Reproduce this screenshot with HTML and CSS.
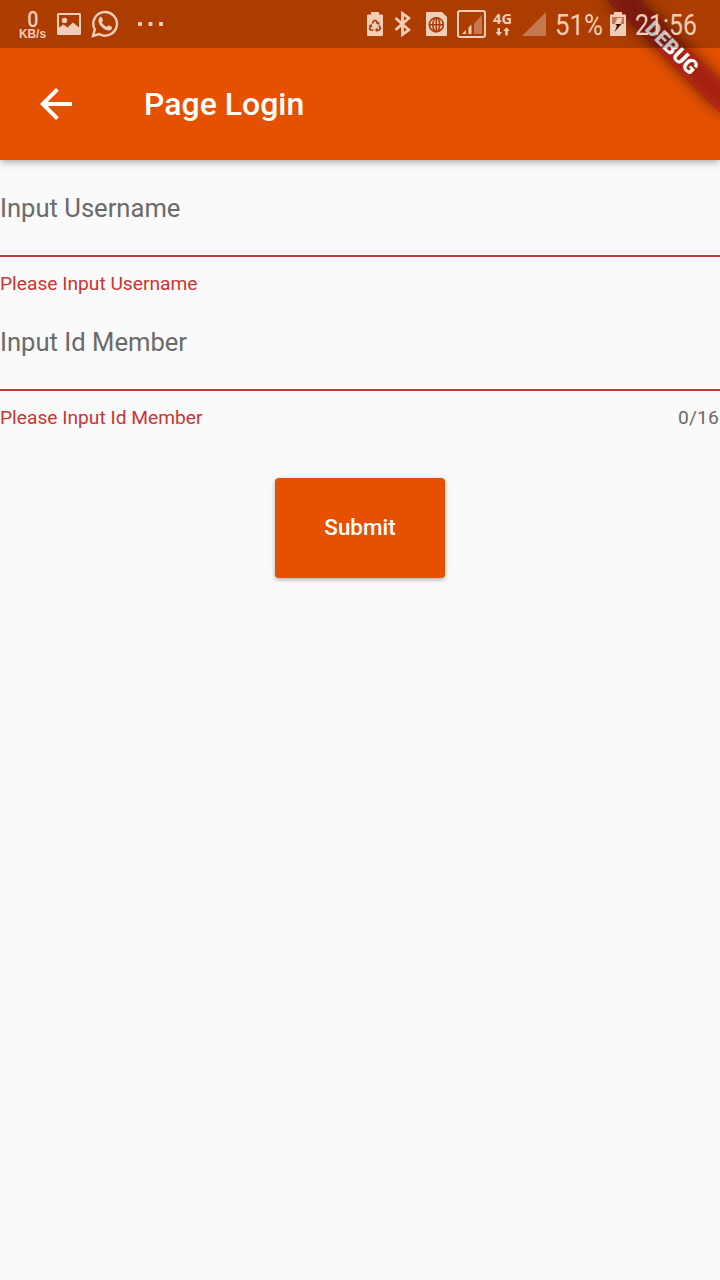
FILE: index.html
```html
<!DOCTYPE html>
<html lang="en">
<head>
<meta charset="utf-8">
<title>Page Login</title>
<link rel="stylesheet" href="styles.css">
</head>
<body>
<div class="screen">
  <svg class="debug-banner" width="160" height="160" viewBox="0 0 160 160" role="img" aria-label="DEBUG">
    <defs>
      <filter id="soft" x="-30%" y="-150%" width="160%" height="400%"><feGaussianBlur stdDeviation="7.4"/></filter>
    </defs>
    <g transform="translate(160 0) rotate(45)">
      <rect class="ribbon-shadow" x="-80" y="56" width="160" height="24" filter="url(#soft)"/>
      <rect class="ribbon" x="-80" y="56" width="160" height="24"/>
      <text class="ribbon-text" x="0" y="74.8" text-anchor="middle">DEBUG</text>
    </g>
  </svg>

  <div class="status-bar">
    <div class="status-left">
      <svg class="ico net-speed" width="28" height="30" viewBox="0 0 28 30">
        <text class="speed-num" x="0" y="0" transform="translate(9.200 16.500) scale(.92 1)">0</text>
        <text class="speed-unit" x="1" y="28.300" textLength="27" lengthAdjust="spacingAndGlyphs">KB/s</text>
      </svg>
      <svg class="ico picture" width="24" height="22" viewBox="0 0 24 22">
        <path fill-rule="evenodd" d="M1.500 0h21A1.500 1.500 0 0 1 24 1.500v19a1.500 1.500 0 0 1-1.500 1.500h-21A1.500 1.500 0 0 1 0 20.500v-19A1.500 1.500 0 0 1 1.500 0zM2 2v12.500l4.500-3 4 3 5.500-5 6 5V2zM7.500 4.700a2.700 2.700 0 1 1 0 5.400 2.700 2.700 0 0 1 0-5.400z"/>
      </svg>
      <svg class="ico chat" width="28" height="28" viewBox="0 0 28 28">
        <path class="line" d="M3.800 19.500A11.800 11.800 0 1 1 8.200 24L2 26z"/>
        <path d="M8.600 7.500c.7-.8 1.700-.9 2.200-.1l1.200 2.700c.3.800-1.200 1.800-1 2.400.9 1.900 2.600 3.400 4.700 4.300.8.200 1.500-1.700 2.200-1.400l2.700 1.400c.8.500.4 2.400-.9 3.100-2.100 1.200-5 .2-7.600-1.700-2.500-1.900-4.400-4.500-4.700-6.900-.1-1.500.4-2.900 1.200-3.800z"/>
      </svg>
      <svg class="ico more" width="26" height="4" viewBox="0 0 26 4">
        <rect x="0" width="4" height="4" rx="1"/><rect x="10.500" width="4" height="4" rx="1"/><rect x="21" width="4" height="4" rx="1"/>
      </svg>
    </div>
    <div class="status-right">
      <svg class="ico saver" width="16" height="24" viewBox="0 0 16 24">
        <path d="M4 0h8v2.500h3a1 1 0 0 1 1 1V23a1 1 0 0 1-1 1H1a1 1 0 0 1-1-1V3.500a1 1 0 0 1 1-1h3z"/>
        <g class="cut-line"><path d="M5.300 11.500L7 8.500h2l1.700 3M12 13.500l1.500 2.700-1 1.800H9.500M6.500 18h-3l-1-1.800L4 13.500"/></g>
        <path class="cut" d="M12.300 9.500v3.500l-3.200-1.500zM10.500 15.500v4.800L7.800 18zM1.500 13.500l3.200-1.400.7 3.400z"/>
      </svg>
      <svg class="ico bluetooth" width="17" height="26" viewBox="0 0 17 26">
        <path class="line thick" d="M1.500 7L14.800 18.800 8.500 23.500V2.500l6.300 4.700L1.500 19"/>
      </svg>
      <svg class="ico sim" width="21" height="24" viewBox="0 0 21 24">
        <path d="M1 0h15l5 5v18a1 1 0 0 1-1 1H1a1 1 0 0 1-1-1V1a1 1 0 0 1 1-1z"/>
        <g class="cut-line"><circle cx="10.300" cy="12.700" r="7"/><ellipse cx="10.300" cy="12.700" rx="3.400" ry="7"/><path d="M10.300 5.700v14M3.400 12.700h13.800"/></g>
      </svg>
      <svg class="ico signal-box" width="29" height="28" viewBox="0 0 29 28">
        <rect class="line frame" x="1" y="1" width="27" height="26" rx="2"/>
        <path class="dim" d="M17 13.500l8-8.500v19h-8z"/>
        <path d="M5 24l4-4v4zM11.500 17.500l3-3V24h-3z"/>
      </svg>
      <svg class="ico net-type" width="20" height="26" viewBox="0 0 20 26">
        <text class="net-label" x="0" y="13" textLength="19" lengthAdjust="spacingAndGlyphs">4G</text>
        <path d="M4.500 17h2.500v4h2l-3.200 4-3.300-4h2zM12.200 24.500h2.600V20h2l-3.300-3.700-3.300 3.700h2z"/>
      </svg>
      <svg class="ico signal" width="24" height="24" viewBox="0 0 24 24"><path class="dim" d="M24 0v24H0z"/></svg>
      <svg class="ico percent" width="48" height="30" viewBox="0 0 48 30">
        <text class="clock-text" x="0" y="25.500" textLength="48" lengthAdjust="spacingAndGlyphs">51%</text>
      </svg>
      <svg class="ico battery" width="16" height="24" viewBox="0 0 16 24">
        <path d="M4 0h8v2.500h3a1 1 0 0 1 1 1V23a1 1 0 0 1-1 1H1a1 1 0 0 1-1-1V3.500a1 1 0 0 1 1-1h3z"/>
        <path class="cell" d="M2 5h12v7H2z"/>
        <path d="M7.300 6h5L10.500 12H4.800z"/>
        <path class="bolt" d="M5.300 12h6.200L4.500 20l2.500-6z"/>
      </svg>
      <svg class="ico clock" width="62" height="30" viewBox="0 0 62 30">
        <text class="clock-text" x="0" y="25.500" textLength="62" lengthAdjust="spacingAndGlyphs">21:56</text>
      </svg>
    </div>
  </div>

  <header class="app-bar">
    <svg class="back" width="48" height="48" viewBox="0 0 24 24"><path d="M20 11H7.830l5.590-5.590L12 4l-8 8 8 8 1.410-1.410L7.830 13H20v-2z"/></svg>
    <h1 class="title">Page Login</h1>
  </header>

  <main class="form">
    <div class="field">
      <div class="label">Input Username</div>
      <div class="helper"><span class="error">Please Input Username</span></div>
    </div>
    <div class="field">
      <div class="label">Input Id Member</div>
      <div class="helper"><span class="error">Please Input Id Member</span><span class="counter">0/16</span></div>
    </div>
    <button class="submit" type="button">Submit</button>
  </main>
</div>
</body>
</html>
```
FILE: styles.css
```css
* { box-sizing: border-box; }
body { margin: 0; background: #fafafa; font-family: Roboto, "Liberation Sans", sans-serif; }
.screen { position: relative; display: flex; flex-direction: column; width: 720px; height: 1280px; overflow: hidden; background: #fafafa; }

.debug-banner { position: absolute; top: 0; right: 0; z-index: 2; }
.ribbon-shadow { fill: rgba(0, 0, 0, 0.5); }
.ribbon { fill: rgba(183, 28, 28, 0.63); }
.ribbon-text { fill: #fff; font-size: 20.4px; font-weight: 900; }

.status-bar { position: relative; z-index: 3; display: flex; justify-content: space-between; height: 48px; padding: 0 23px 0 18px; background: rgba(0, 0, 0, 0.25); }
.status-left, .status-right { display: flex; align-items: center; }
.ico { display: block; flex: none; fill: #f2cdb9; overflow: visible; }
.line { fill: none; stroke: #f2cdb9; stroke-width: 2.4; }
.thick { stroke-width: 2.8; }
.frame { stroke-width: 2; }
.dim { fill: #c57850; }
.cut { fill: #ac3d00; }
.cut-line { fill: none; stroke: #ac3d00; stroke-width: 1.6; }
.cell { fill: #c57850; }
.bolt { fill: #2c1206; }
.net-speed { margin-right: 11px; margin-top: 1px; }
.picture { margin-right: 10px; }
.chat { margin-right: 19px; }
.saver { margin-right: 11px; }
.bluetooth { margin-right: 15px; }
.sim { margin-right: 10px; }
.signal-box { margin-right: 7px; }
.net-type { margin-right: 9px; }
.signal { margin-right: 9px; }
.percent { margin-right: 7px; }
.battery { margin-right: 9px; }
.speed-num { font-size: 21.500px; font-weight: 500; }
.speed-unit { font: bold 12px "Liberation Sans", sans-serif; }
.net-label { font: bold 15px "Open Sans", sans-serif; }
.clock-text { font-size: 29.500px; font-weight: 400; }

.app-bar { position: relative; z-index: 1; display: flex; align-items: center; gap: 64px; height: 160px; margin-top: -48px; padding: 48px 32px 0; background: #e65100; box-shadow: 0 3px 6px -1px rgba(0, 0, 0, 0.2), 0 4px 8px rgba(0, 0, 0, 0.12); }
.back { fill: #fff; }
.title { margin: 0; color: #fff; font-size: 32px; font-weight: 500; line-height: 38px; }

.form { display: flex; flex-direction: column; }
.field { height: 134px; padding-top: 32px; }
.label { height: 65px; border-bottom: 2px solid #c03a38; color: #6a6a6a; font-size: 25.600px; line-height: 32px; }
.helper { display: flex; justify-content: space-between; padding: 15px 1px 0 0; font-size: 19.200px; line-height: 24px; }
.error { color: #cb3434; }
.counter { color: #6a6a6a; letter-spacing: 0.2px; }
.submit { align-self: center; width: 170px; height: 100px; margin-top: 50px; padding: 0 0 2px; border: 0; border-radius: 4px; background: #e65100; box-shadow: 0 2px 4px rgba(0, 0, 0, 0.22), 0 1px 5px rgba(0, 0, 0, 0.1); color: #fff; font: 500 22.400px Roboto, sans-serif; }
```
